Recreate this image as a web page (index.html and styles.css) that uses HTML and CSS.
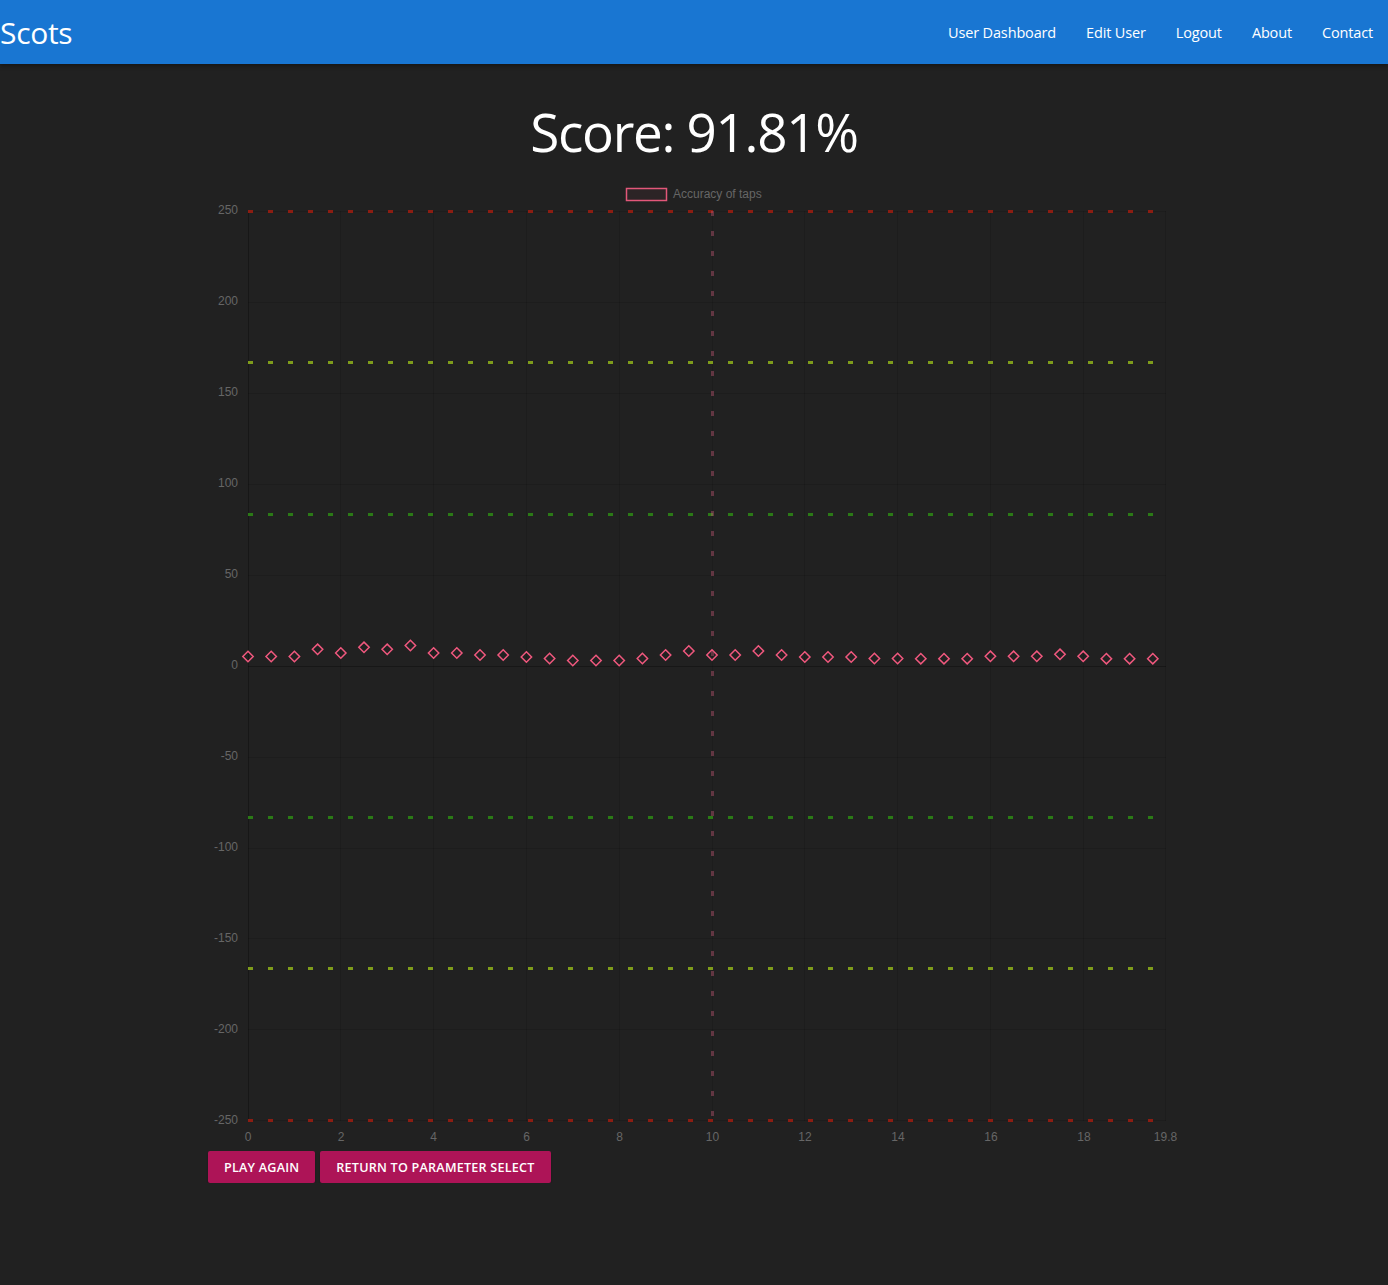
FILE: index.html
```html
<!DOCTYPE html>
<html lang="en">
<head>
<meta charset="utf-8">
<title>Scots</title>
<link rel="stylesheet" href="styles.css">
</head>
<body>
<nav class="navbar">
  <a class="brand" href="#">Scots</a>
  <ul class="nav-links">
    <li><a href="#">User Dashboard</a></li>
    <li><a href="#">Edit User</a></li>
    <li><a href="#">Logout</a></li>
    <li><a href="#">About</a></li>
    <li><a href="#">Contact</a></li>
  </ul>
</nav>
<main class="container">
  <h1 class="score">Score: 91.81%</h1>
  <div class="chart">
    <svg class="chart-svg" width="972" height="966" viewBox="208 180 972 966" xmlns="http://www.w3.org/2000/svg">
      <defs>
        <path id="d" d="M0 -5.2L5.2 0L0 5.2L-5.2 0Z"/>
      </defs>
      <!-- legend -->
      <rect x="626.5" y="188.5" width="40" height="12" fill="rgba(255,99,132,0.05)" stroke="#e2577a" stroke-width="1.5"/>
      <text class="legend" x="673" y="198">Accuracy of taps</text>
      <!-- horizontal grid -->
      <g stroke="rgba(0,0,0,0.12)" stroke-width="1">
        <line x1="248" y1="211.5" x2="1166" y2="211.5"/>
        <line x1="248" y1="302.5" x2="1166" y2="302.5"/>
        <line x1="248" y1="393.5" x2="1166" y2="393.5"/>
        <line x1="248" y1="484.5" x2="1166" y2="484.5"/>
        <line x1="248" y1="575.5" x2="1166" y2="575.5"/>
        <line x1="248" y1="757.5" x2="1166" y2="757.5"/>
        <line x1="248" y1="848.5" x2="1166" y2="848.5"/>
        <line x1="248" y1="938.5" x2="1166" y2="938.5"/>
        <line x1="248" y1="1029.5" x2="1166" y2="1029.5"/>
        <line x1="248" y1="1120.5" x2="1166" y2="1120.5"/>
      </g>
      <!-- vertical grid -->
      <g stroke="rgba(0,0,0,0.12)" stroke-width="1">
        <line x1="340.5" y1="211" x2="340.5" y2="1121"/>
        <line x1="433.5" y1="211" x2="433.5" y2="1121"/>
        <line x1="526.5" y1="211" x2="526.5" y2="1121"/>
        <line x1="619.5" y1="211" x2="619.5" y2="1121"/>
        <line x1="712.5" y1="211" x2="712.5" y2="1121"/>
        <line x1="804.5" y1="211" x2="804.5" y2="1121"/>
        <line x1="897.5" y1="211" x2="897.5" y2="1121"/>
        <line x1="990.5" y1="211" x2="990.5" y2="1121"/>
        <line x1="1083.5" y1="211" x2="1083.5" y2="1121"/>
        <line x1="1165.5" y1="211" x2="1165.5" y2="1121"/>
      </g>
      <!-- zero lines -->
      <g stroke="rgba(0,0,0,0.3)" stroke-width="1">
        <line x1="248.5" y1="211" x2="248.5" y2="1121"/>
        <line x1="248" y1="666.5" x2="1166" y2="666.5"/>
      </g>
      <!-- y labels -->
      <g class="tick" text-anchor="end">
        <text x="238" y="214">250</text>
        <text x="238" y="305">200</text>
        <text x="238" y="396">150</text>
        <text x="238" y="487">100</text>
        <text x="238" y="578">50</text>
        <text x="238" y="669">0</text>
        <text x="238" y="760">-50</text>
        <text x="238" y="851">-100</text>
        <text x="238" y="942">-150</text>
        <text x="238" y="1033">-200</text>
        <text x="238" y="1124">-250</text>
      </g>
      <!-- x labels -->
      <g class="tick" text-anchor="middle">
        <text x="248" y="1141">0</text>
        <text x="341" y="1141">2</text>
        <text x="433.5" y="1141">4</text>
        <text x="526.5" y="1141">6</text>
        <text x="619.5" y="1141">8</text>
        <text x="712.5" y="1141">10</text>
        <text x="805" y="1141">12</text>
        <text x="898" y="1141">14</text>
        <text x="991" y="1141">16</text>
        <text x="1084" y="1141">18</text>
        <text x="1165.5" y="1141">19.8</text>
      </g>
      <!-- data points -->
      <g fill="none" stroke="#f0587e" stroke-width="1.5">
        <use href="#d" x="248" y="656.5"/>
        <use href="#d" x="271.2" y="656.5"/>
        <use href="#d" x="294.4" y="656.5"/>
        <use href="#d" x="317.6" y="649.3"/>
        <use href="#d" x="340.8" y="653"/>
        <use href="#d" x="364" y="647.3"/>
        <use href="#d" x="387.2" y="649.3"/>
        <use href="#d" x="410.4" y="645.5"/>
        <use href="#d" x="433.6" y="653"/>
        <use href="#d" x="456.8" y="653"/>
        <use href="#d" x="480" y="655"/>
        <use href="#d" x="503.2" y="655"/>
        <use href="#d" x="526.4" y="657"/>
        <use href="#d" x="549.6" y="658.5"/>
        <use href="#d" x="572.8" y="660.5"/>
        <use href="#d" x="596" y="660.5"/>
        <use href="#d" x="619.2" y="660.5"/>
        <use href="#d" x="642.4" y="658.5"/>
        <use href="#d" x="665.6" y="655"/>
        <use href="#d" x="688.8" y="651"/>
        <use href="#d" x="712" y="655"/>
        <use href="#d" x="735.2" y="655"/>
        <use href="#d" x="758.4" y="651"/>
        <use href="#d" x="781.6" y="655"/>
        <use href="#d" x="804.8" y="657"/>
        <use href="#d" x="828" y="657"/>
        <use href="#d" x="851.2" y="657"/>
        <use href="#d" x="874.4" y="658.5"/>
        <use href="#d" x="897.6" y="658.5"/>
        <use href="#d" x="920.8" y="658.7"/>
        <use href="#d" x="944" y="658.7"/>
        <use href="#d" x="967.2" y="658.7"/>
        <use href="#d" x="990.4" y="656.3"/>
        <use href="#d" x="1013.6" y="656.3"/>
        <use href="#d" x="1036.8" y="656.3"/>
        <use href="#d" x="1060" y="654.3"/>
        <use href="#d" x="1083.2" y="656.3"/>
        <use href="#d" x="1106.4" y="658.7"/>
        <use href="#d" x="1129.6" y="658.7"/>
        <use href="#d" x="1152.8" y="658.7"/>
      </g>
      <!-- threshold annotations -->
      <g stroke-width="3" stroke-dasharray="5 15">
        <line stroke="#8c1d12" x1="248" y1="211.5" x2="1160" y2="211.5"/>
        <line stroke="#8c1d12" x1="248" y1="1120.5" x2="1160" y2="1120.5"/>
        <line stroke="#7f9c1b" x1="248" y1="362.5" x2="1160" y2="362.5"/>
        <line stroke="#7f9c1b" x1="248" y1="968.5" x2="1160" y2="968.5"/>
        <line stroke="#2b7a16" x1="248" y1="514.5" x2="1160" y2="514.5"/>
        <line stroke="#2b7a16" x1="248" y1="817.5" x2="1160" y2="817.5"/>
        <line stroke="rgba(200,90,120,0.4)" x1="712.5" y1="211" x2="712.5" y2="1121"/>
      </g>
    </svg>
  </div>
  <div class="actions">
    <a class="btn" href="#">Play Again</a>
    <a class="btn" href="#">Return to Parameter Select</a>
  </div>
</main>
</body>
</html>
```
FILE: styles.css
```css
* { box-sizing: border-box; }

html, body {
  margin: 0;
  padding: 0;
  background: #212121;
  color: #ffffff;
  font-family: "Open Sans", "Noto Sans", "Liberation Sans", sans-serif;
}

.navbar {
  height: 64px;
  background: #1976d2;
  display: flex;
  align-items: center;
  justify-content: space-between;
  box-shadow: 0 2px 4px rgba(0, 0, 0, 0.35);
}

.brand {
  color: #ffffff;
  text-decoration: none;
  font-size: 30px;
  line-height: 64px;
  letter-spacing: -0.3px;
  padding-top: 2px;
}

.nav-links {
  list-style: none;
  margin: 0;
  padding: 0;
  display: flex;
  height: 64px;
}

.nav-links a {
  display: block;
  color: #ffffff;
  text-decoration: none;
  font-size: 14.5px;
  line-height: 64px;
  padding: 1px 15px 0;
  letter-spacing: -0.15px;
}

.container {
  width: 972px;
  margin: 0 auto;
}

.score {
  margin: 36px 0 0;
  font-weight: 400;
  font-size: 53px;
  line-height: 64px;
  letter-spacing: -1.3px;
  text-align: center;
  color: #ffffff;
}

.chart {
  margin-top: 16px;
}

.chart-svg {
  display: block;
}

.tick text {
  font-family: "Liberation Sans", Arial, sans-serif;
  font-size: 12px;
  fill: #666666;
}

.legend {
  font-family: "Liberation Sans", Arial, sans-serif;
  font-size: 12px;
  fill: #666666;
}

.actions {
  display: flex;
  gap: 5px;
  margin-top: 5px;
}

.btn {
  display: inline-block;
  height: 32px;
  line-height: 33px;
  padding: 0 16px;
  background: #ad1457;
  color: #ffffff;
  text-decoration: none;
  text-transform: uppercase;
  font-size: 12.6px;
  font-weight: 600;
  letter-spacing: 0.22px;
  border-radius: 2px;
  box-shadow: 0 2px 2px rgba(0, 0, 0, 0.25);
}
```
